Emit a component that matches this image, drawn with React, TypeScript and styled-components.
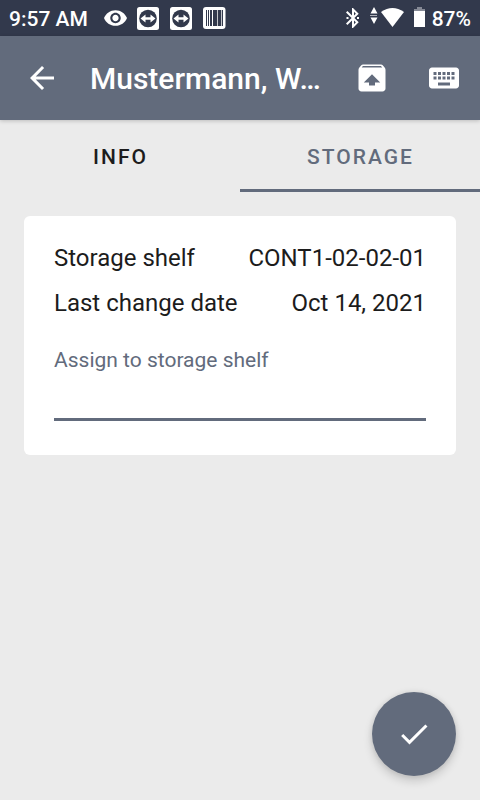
import React, { useState } from "react";
import styled, { createGlobalStyle } from "styled-components";

const slate = "#626b7c";

const GlobalStyle = createGlobalStyle`
  * { box-sizing: border-box; }
  body {
    margin: 0;
    background: #ebebeb;
    color: #1c1c1c;
    font-family: Roboto, "Liberation Sans", sans-serif;
  }
  button, input { font: inherit; color: inherit; }
`;

const Screen = styled.div`
  min-height: 100vh;
  display: flex;
  flex-direction: column;
`;

const StatusBar = styled.div`
  height: 36px;
  padding: 0 9px;
  display: flex;
  align-items: center;
  justify-content: space-between;
  background: #32394c;
  color: #fff;
  font-size: 21px;
  line-height: 24px;
  font-weight: 500;
`;

const StatusGroup = styled.div<{ $gap: number }>`
  display: flex;
  align-items: center;
  gap: ${(p) => p.$gap}px;
  svg { display: block; }
`;

const StatusText = styled.span`
  padding-top: 2px;
`;

const Clock = styled(StatusText)`
  margin-right: 6px;
`;

const AppBar = styled.header`
  height: 84px;
  padding: 0 18px;
  display: flex;
  align-items: center;
  background: ${slate};
  color: #fff;
  box-shadow: 0 1px 4px rgba(0, 0, 0, 0.2);
`;

const IconButton = styled.button`
  width: 48px;
  height: 48px;
  flex: none;
  display: grid;
  place-items: center;
  padding: 0;
  border: 0;
  background: none;
  cursor: pointer;
  svg { display: block; }
`;

const Actions = styled.div`
  display: flex;
  gap: 24px;
  margin-right: -6px;
`;

const Title = styled.h1`
  flex: 1;
  min-width: 0;
  margin: 0 12px 0 24px;
  padding-top: 2px;
  font-size: 30px;
  line-height: 36px;
  font-weight: 500;
  white-space: nowrap;
  overflow: hidden;
`;

const Tabs = styled.div`
  display: grid;
  grid-template-columns: 1fr 1fr;
  height: 72px;
`;

const Tab = styled.button<{ $active?: boolean }>`
  padding: 5px 0 0 1px;
  border: 0;
  border-bottom: 3px solid ${(p) => (p.$active ? slate : "transparent")};
  background: none;
  color: ${(p) => (p.$active ? slate : "#1c1c1c")};
  font-size: 21px;
  line-height: 24px;
  font-weight: 500;
  letter-spacing: 2px;
  text-transform: uppercase;
  cursor: pointer;
`;

const Card = styled.section`
  margin: 24px;
  padding: 27px 30px 34px;
  border-radius: 6px;
  background: #fff;
`;

const Details = styled.dl`
  margin: 0;
  display: grid;
  gap: 15px;
`;

const Detail = styled.div`
  display: flex;
  justify-content: space-between;
  font-size: 24px;
  line-height: 30px;
  dt, dd { margin: 0; }
`;

const Field = styled.div`
  margin-top: 30px;
  display: flex;
  flex-direction: column;
`;

const FieldLabel = styled.label`
  color: ${slate};
  font-size: 21px;
  line-height: 24px;
`;

const FieldInput = styled.input`
  width: 100%;
  height: 49px;
  padding: 0;
  border: 0;
  border-bottom: 3px solid ${slate};
  border-radius: 0;
  outline: none;
  background: none;
  font-size: 24px;
`;

const Fab = styled.button`
  position: fixed;
  right: 24px;
  bottom: 24px;
  width: 84px;
  height: 84px;
  display: grid;
  place-items: center;
  padding: 0;
  border: 0;
  border-radius: 50%;
  background: ${slate};
  color: #fff;
  box-shadow: 0 5px 10px rgba(0, 0, 0, 0.16), 0 0 6px rgba(0, 0, 0, 0.1);
  cursor: pointer;
`;

const Material = ({ d }: { d: string }) => (
  <svg width="36" height="36" viewBox="0 0 24 24" fill="currentColor" aria-hidden="true">
    <path d={d} />
  </svg>
);

const paths = {
  back: "M20 11H7.83l5.59-5.59L12 4l-8 8 8 8 1.41-1.41L7.83 13H20v-2z",
  unarchive:
    "M20.55 5.22l-1.39-1.68C18.88 3.21 18.47 3 18 3H6c-.47 0-.88.21-1.15.55L3.46 5.22C3.17 5.57 3 6.01 3 6.5V19c0 1.1.89 2 2 2h14c1.1 0 2-.9 2-2V6.5c0-.49-.17-.93-.45-1.28zM12 9.5l5.5 5.5H14v2h-4v-2H6.5L12 9.5zM5.12 5l.82-1h12l.93 1H5.12z",
  keyboard:
    "M20 5H4c-1.1 0-1.99.9-1.99 2L2 17c0 1.1.9 2 2 2h16c1.1 0 2-.9 2-2V7c0-1.1-.9-2-2-2zm-9 3h2v2h-2V8zm0 3h2v2h-2v-2zM8 8h2v2H8V8zm0 3h2v2H8v-2zm-1 2H5v-2h2v2zm0-3H5V8h2v2zm9 7H8v-2h8v2zm0-4h-2v-2h2v2zm0-3h-2V8h2v2zm3 3h-2v-2h2v2zm0-3h-2V8h2v2z",
  check: "M9 16.17L4.83 12l-1.42 1.41L9 19 21 7l-1.41-1.41z",
};

const EyeIcon = () => (
  <svg width="23" height="16" viewBox="1 4.5 22 15" fill="#fff" aria-hidden="true">
    <path d="M12 4.5C7 4.5 2.73 7.61 1 12c1.73 4.39 6 7.5 11 7.5s9.27-3.11 11-7.5c-1.73-4.39-6-7.5-11-7.5zM12 17c-2.76 0-5-2.24-5-5s2.24-5 5-5 5 2.24 5 5-2.24 5-5 5zm0-8c-1.66 0-3 1.34-3 3s1.34 3 3 3 3-1.34 3-3-1.34-3-3-3z" />
  </svg>
);

const RemoteIcon = () => (
  <svg width="23" height="24" viewBox="0 0 23 24" aria-hidden="true">
    <rect y="1" width="22" height="23" rx="2.5" fill="#fff" />
    <circle cx="11" cy="12.500" r="8.8" fill="#32394c" />
    <path d="M3.500 12.500L8.500 8.500v2.800h5V8.500l5 4-5 4v-2.800h-5v2.800z" fill="#fff" />
  </svg>
);

const BarcodeIcon = () => (
  <svg width="23" height="24" viewBox="0 0 23 24" aria-hidden="true">
    <rect y="1" width="22.500" height="22" rx="3" fill="#fff" />
    <path d="M3 4h17v16H3z" fill="#32394c" />
    <path d="M4 4h1v16H4zM6 4h1v16H6zM9 4h1v16H9z" fill="#fff" />
    <path d="M14 4h1v16h-1zM18 4h1v16h-1z" fill="#fff" opacity="0.7" />
  </svg>
);

const BluetoothIcon = () => (
  <svg width="14" height="20" viewBox="5 2 14 20" fill="#fff" aria-hidden="true">
    <path d="M17.71 7.71L12 2h-1v7.59L6.41 5 5 6.41 10.59 12 5 17.59 6.41 19 11 14.41V22h1l5.71-5.71-4.3-4.29 4.3-4.29zM13 5.83l1.88 1.88L13 9.59V5.83zm1.88 10.46L13 18.17v-3.76l1.88 1.88z" />
    <path d="M5.500 11h2v2h-2zM16 11h2v2h-2z" />
  </svg>
);

const WifiIcon = () => (
  <svg width="34" height="22" viewBox="0 0 34 22" fill="#fff" aria-hidden="true">
    <path d="M4 0l3.500 6.500h-7zM4 17l-3.500-6.500h7z" />
    <path d="M0 8h7v1H0z" opacity="0.6" />
    <path d="M11 5Q22.500-3 34 5L22.500 20z" />
  </svg>
);

const BatteryIcon = () => (
  <svg width="11" height="22" viewBox="0 0 11 22" aria-hidden="true">
    <path d="M3 0h5v2h3v3H0V2h3z" fill="#858995" />
    <path d="M0 4h11v16H0z" fill="#fff" />
  </svg>
);

export default function App() {
  const [tab, setTab] = useState("Storage");
  const [shelf, setShelf] = useState("");

  return (
    <>
      <GlobalStyle />
      <Screen>
        <StatusBar>
          <StatusGroup $gap={10}>
            <Clock>9:57 AM</Clock>
            <EyeIcon />
            <RemoteIcon />
            <RemoteIcon />
            <BarcodeIcon />
          </StatusGroup>
          <StatusGroup $gap={10}>
            <BluetoothIcon />
            <WifiIcon />
            <StatusGroup $gap={7}>
              <BatteryIcon />
              <StatusText>87%</StatusText>
            </StatusGroup>
          </StatusGroup>
        </StatusBar>
        <AppBar>
          <IconButton aria-label="Back">
            <Material d={paths.back} />
          </IconButton>
          <Title>Mustermann, W…</Title>
          <Actions>
            <IconButton aria-label="Unarchive">
              <Material d={paths.unarchive} />
            </IconButton>
            <IconButton aria-label="Keyboard">
              <Material d={paths.keyboard} />
            </IconButton>
          </Actions>
        </AppBar>
        <Tabs role="tablist">
          {["Info", "Storage"].map((name) => (
            <Tab key={name} role="tab" aria-selected={tab === name} $active={tab === name} onClick={() => setTab(name)}>
              {name}
            </Tab>
          ))}
        </Tabs>
        <Card>
          <Details>
            <Detail>
              <dt>Storage shelf</dt>
              <dd>CONT1-02-02-01</dd>
            </Detail>
            <Detail>
              <dt>Last change date</dt>
              <dd>Oct 14, 2021</dd>
            </Detail>
          </Details>
          <Field>
            <FieldLabel htmlFor="shelf">Assign to storage shelf</FieldLabel>
            <FieldInput id="shelf" value={shelf} onChange={(e) => setShelf(e.target.value)} />
          </Field>
        </Card>
        <Fab aria-label="Confirm">
          <Material d={paths.check} />
        </Fab>
      </Screen>
    </>
  );
}
